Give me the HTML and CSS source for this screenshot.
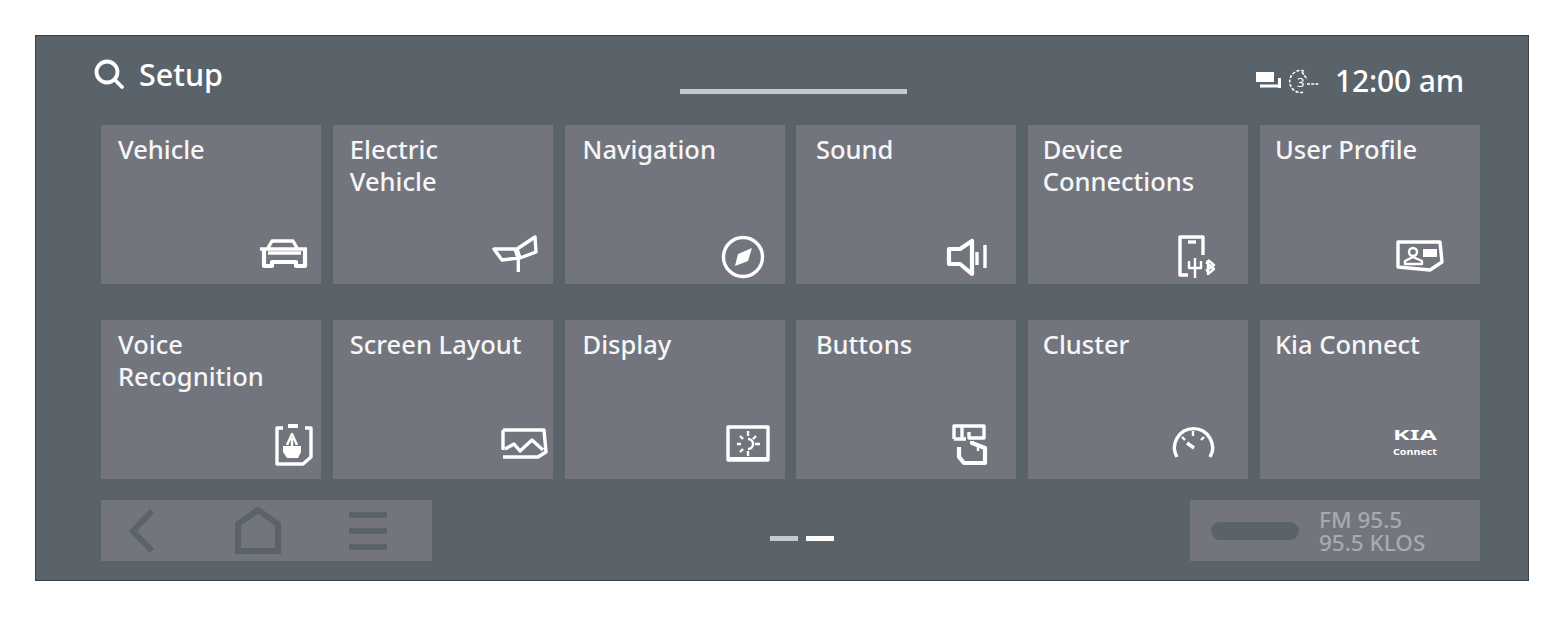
FILE: index.html
```html
<!DOCTYPE html>
<html lang="en">
<head>
<meta charset="utf-8">
<title>Setup</title>
<link rel="stylesheet" href="styles.css">
</head>
<body>
<main class="screen">
  <header class="top">
    <div class="title">
      <svg class="search" viewBox="0 0 30 30"><circle cx="13" cy="13" r="10.5"/><path d="M20.5 20.5 L28 28"/></svg>
      <span class="title-text">Setup</span>
    </div>
    <div class="progress"></div>
    <div class="status">
      <svg class="status-msg" viewBox="0 0 26 20"><path class="fill" d="M0 1 H18 V11 H0 Z"/><path class="line" d="M4 15 H22 M23.5 7 V17"/></svg>
      <svg class="status-clock" viewBox="0 0 32 25"><path class="dash" d="M17 2 A11 11 0 1 0 17 23"/><text x="10" y="18" class="st3">3</text><path class="line1" d="M15 3 L20 10 M20 15 H32"/></svg>
      <span class="clock">12:00 am</span>
    </div>
  </header>

  <section class="grid">
    <article class="card"><h2>Vehicle</h2>
      <svg class="ico" viewBox="0 -10 100 60"><path d="M47 14 L51 7 H72 L76 14"/><path d="M39 15 H86"/><path class="thick" d="M43 16 V32 H51 V28 H75 V32 H84 V16"/><path d="M47 19 H80"/></svg></article>
    <article class="card"><h2>Electric<br>Vehicle</h2>
      <svg class="ico" viewBox="0 -10 100 60"><path d="M41 15 H62 L65 24 L49 26 Z"/><path d="M64 15 L82 3 L83 18 L67 24 Z"/><path d="M65.3 24 V38"/></svg></article>
    <article class="card"><h2>Navigation</h2>
      <svg class="ico" viewBox="0 -10 100 60"><circle cx="58" cy="23" r="19.5"/><path class="fill" d="M67 14 L63 27 L50 32 L53 20 Z"/></svg></article>
    <article class="card"><h2>Sound</h2>
      <svg class="ico" viewBox="0 -10 100 60"><path class="thick" d="M33 15 H44 L56 7 V40 L44 30 H33 Z"/><path d="M61 18 V31 M69 11 V34"/></svg></article>
    <article class="card"><h2>Device<br>Connections</h2>
      <svg class="ico" viewBox="0 -10 100 60"><path d="M40 41 H32 V3 H55 V21"/><path d="M40 8 H48"/><path class="mid" d="M47 24 V44 M41 27 V34 H53 V27 M60 26 L66 31 L58 37 M58 28 L66 35 L60 40 V26"/></svg></article>
    <article class="card"><h2>User Profile</h2>
      <svg class="ico" viewBox="0 -10 100 60"><path d="M18 8 H60 L62 28 L50 36 L18 33 Z"/><circle class="mid" cx="33" cy="18" r="4"/><path class="mid" d="M25 30 V27 L33 23 L42 27 V30 Z"/><path class="fill" d="M43 15 H57 V23 H43 Z"/></svg></article>

    <article class="card"><h2>Voice<br>Recognition</h2>
      <svg class="ico" viewBox="0 -10 100 60"><path d="M62 -1 H56 V35 H82 L90 28 V-1 H84"/><path class="fill" d="M67 -5 H77 V-1 H67 Z M62 17 H80 V23 L77 29 H66 L62 23 Z"/><path class="mid" d="M66 16 L71 5 L76 16 M71 9 V17"/></svg></article>
    <article class="card"><h2>Screen Layout</h2>
      <svg class="ico" viewBox="0 -10 100 60"><path d="M50 1 H91 L93 23 L85 28 H50"/><path d="M50 1 V21"/><path d="M52 20 L61 15 L67 22 L79 11 L90 21"/></svg></article>
    <article class="card"><h2>Display</h2>
      <svg class="ico" viewBox="0 -10 100 60"><path d="M43 -2 H83 V31 H43 Z"/><path class="thick" d="M45 30 H82"/><path class="mid" d="M63 10 A5 5 0 1 1 63 20 M63 2 V7 M63 22 V27 M52 15 H56 M70 15 H75 M55 7 L58 10 M71 7 L68 10 M55 23 L58 20"/></svg></article>
    <article class="card"><h2>Buttons</h2>
      <svg class="ico" viewBox="0 -10 100 60"><path d="M38 10 V-3 H68 V9 H53 V3"/><path d="M38 10 H50 M46 -3 V10"/><path class="thick" d="M43 18 V28 L48 34 H69 V19 L56 14 V12"/><path class="mid" d="M62 16 V22"/></svg></article>
    <article class="card"><h2>Cluster</h2>
      <svg class="ico" viewBox="0 -10 100 60"><path d="M29 28 A19 19 0 1 1 62 28"/><path d="M39 14 L46 19"/><path class="mid" d="M45 2 V7 M34 8 L37 11 M56 8 L53 11"/></svg></article>
    <article class="card"><h2>Kia Connect</h2>
      <svg class="ico" viewBox="0 -10 100 60"><text class="kia" x="13" y="11" textLength="44" lengthAdjust="spacingAndGlyphs">KIA</text><text class="conn" x="13" y="26" textLength="44" lengthAdjust="spacingAndGlyphs">Connect</text></svg></article>
  </section>

  <footer class="bottom">
    <nav class="nav">
      <svg class="nav-back" viewBox="0 0 26 44"><path d="M23 2 L4 22 L23 42"/></svg>
      <svg class="nav-home" viewBox="0 0 46 48"><path d="M3 44 V17 L23 3 L43 17 V44 Z"/></svg>
      <svg class="nav-menu" viewBox="0 0 38 38"><path d="M0 3 H38 M0 19 H38 M0 35 H38"/></svg>
    </nav>
    <div class="pager"><span class="dash-item"></span><span class="dash-item active"></span></div>
    <div class="radio">
      <span class="pill"></span>
      <div class="radio-text">FM 95.5<br>95.5 KLOS</div>
    </div>
  </footer>
</main>
</body>
</html>
```

FILE: styles.css
```css
* { box-sizing: border-box; }
html, body { margin: 0; background: #fff; }
body { padding: 35px 0 0 35px; font-family: "Noto Sans", "Open Sans", sans-serif; }

.screen {
  width: 1494px;
  height: 546px;
  background: #5b636a;
  border: 1px solid #3a4249;
  padding: 0 48px 0 65px;
  display: flex;
  flex-direction: column;
}

.top {
  height: 89px;
  margin: 0 16px 0 -6px;
  display: flex;
  justify-content: space-between;
  color: #fff;
}
.title { display: flex; align-items: center; height: 76px; }
.search { width: 30px; height: 30px; margin: 0 15px 0 -1px; fill: none; stroke: #fff; stroke-width: 3.8; stroke-linecap: round; }
.title-text { font-size: 30.5px; line-height: 76px; font-weight: 500; }
.progress { width: 227px; height: 5px; background: #c6cacc; margin-top: 53px; margin-left: 108px; }
.status { display: flex; align-items: center; height: 90px; }
.status-msg { width: 26px; height: 20px; margin-right: 5px; fill: none; }
.status-msg .fill { fill: #fff; }
.status-msg .line { stroke: #fff; stroke-width: 3; }
.status-clock { width: 32px; height: 25px; margin-right: 16px; fill: none; }
.status-clock .dash { stroke: #fff; stroke-width: 1.6; stroke-dasharray: 3 1.6; }
.status-clock .line1 { stroke: #fff; stroke-width: 1.6; stroke-dasharray: 3 1.2; }
.st3 { fill: #fff; font-size: 13px; font-family: "Noto Sans", sans-serif; }
.clock { font-size: 30px; line-height: 90px; font-weight: 500; letter-spacing: -0.15px; }

.grid {
  display: grid;
  grid-template-columns: repeat(6, 220px);
  grid-auto-rows: 159px;
  column-gap: 11.8px;
  row-gap: 36px;
}
.card {
  background: #72757e;
  padding: 9px 0 0 17px;
  display: flex;
  flex-direction: column;
  color: #f6f6f6;
}
.card:nth-child(6n+3) { padding-left: 18px; }
.card:nth-child(6n+4) { padding-left: 19.5px; }
.card:nth-child(6n+5) { padding-left: 14.5px; }
.card:nth-child(6n) { padding-left: 15px; }
.card h2 { margin: 0; font-size: 25.5px; line-height: 31.5px; font-weight: 500; }
.ico {
  width: 100px;
  height: 60px;
  margin-top: auto;
  align-self: flex-end;
  fill: none;
  stroke: #fff;
  stroke-width: 3.4;
  stroke-linejoin: round;
}
.ico .thick { stroke-width: 4.2; }
.ico .mid { stroke-width: 2.4; }
.ico .fill { fill: #fff; stroke: none; }
.kia { fill: #fff; stroke: none; font-size: 14px; font-weight: 700; font-family: "Noto Sans", sans-serif; }
.conn { fill: #fff; stroke: none; font-size: 9px; font-weight: 700; font-family: "Noto Sans", sans-serif; }

.bottom {
  display: flex;
  justify-content: space-between;
  margin-top: 21px;
  height: 61px;
}
.nav {
  width: 331px;
  background: #72757e;
  display: flex;
  align-items: center;
  padding-left: 28px;
  fill: none;
  stroke: #5b636a;
  stroke-width: 6;
}
.nav-back { width: 26px; height: 44px; }
.nav-home { width: 46px; height: 48px; margin-left: 80px; }
.nav-menu { width: 38px; height: 38px; margin-left: 68px; }
.pager { display: flex; gap: 8px; margin: 36px 18px 0 0; }
.dash-item { width: 28px; height: 5px; background: #c6cacc; }
.dash-item.active { background: #fff; }
.radio {
  width: 290px;
  background: #72757e;
  display: flex;
  align-items: center;
  padding-left: 21px;
}
.pill { width: 88px; height: 18px; border-radius: 9px; background: #5b636a; margin-right: 20px; }
.radio-text { color: #a7aaaf; font-size: 22.5px; line-height: 23px; font-weight: 500; }
```
